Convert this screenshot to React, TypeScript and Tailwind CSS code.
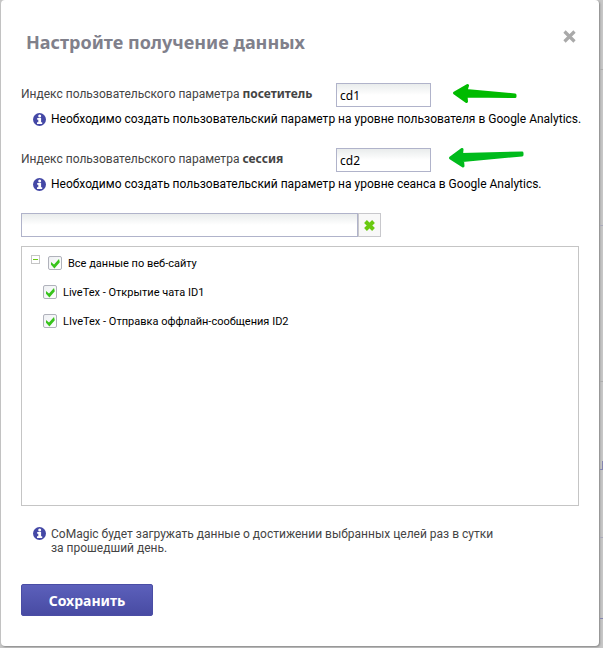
import React from "react";

function InfoIcon() {
  return (
    <svg className="h-[13px] w-[13px] shrink-0" viewBox="0 0 13 13" aria-hidden="true">
      <circle cx="6.5" cy="6.5" r="6.5" fill="#4448a6" />
      <circle cx="6.7" cy="3.1" r="1.500" fill="#fff" />
      <path d="M4.200 5.100h3.900v4.200h1.100v1.600H4V9.300h1.300V6.700H4.200z" fill="#fff" />
    </svg>
  );
}

function Arrow({ up }: { up?: boolean }) {
  return up ? (
    <svg className="ml-[17px] h-[24px] w-[77px]" viewBox="0 0 77 24" aria-hidden="true">
      <path d="M2.500 10 14 1.500 13.500 6.500 74 5v2L14.500 12.500l.5 5.500z" fill="#00bb1c" stroke="#00bb1c" strokeWidth="3" strokeLinejoin="round" />
    </svg>
  ) : (
    <svg className="ml-[21px] h-[24px] w-[66px]" viewBox="0 0 66 24" aria-hidden="true">
      <path d="M2.500 10 15.500 2.500 14 7.500 63 12v1.500L14 13l.5 5.500z" fill="#00bb00" stroke="#00bb00" strokeWidth="3" strokeLinejoin="round" />
    </svg>
  );
}

const field = "h-6 min-w-0 border border-[#b0b3ca] bg-linear-to-b from-[#e9ecec] to-white to-50% outline-none";
const bold = "font-['Noto_Sans',sans-serif] font-bold";

function Param({ id, name, value, hint, up }: { id: string; name: string; value: string; hint: string; up?: boolean }) {
  return (
    <div className="mb-[17px]">
      <div className="flex">
        <label htmlFor={id} className="w-[315px] shrink-0 pt-px leading-5 text-[#444]">
          Индекс пользовательского параметра <b className={bold}>{name}</b>
        </label>
        <input id={id} defaultValue={value} className={`${field} w-[95px] px-[3px] font-['Noto_Sans',sans-serif] text-[12px]`} />
        <Arrow up={up} />
      </div>
      <p className="flex h-6 items-center gap-[5px] pl-3 whitespace-nowrap text-black">
        <InfoIcon />
        {hint}
      </p>
    </div>
  );
}

function Check({ label, indent }: { label: string; indent?: boolean }) {
  return (
    <label className={`flex h-[29px] items-center gap-1.5 text-[11px] text-black ${indent ? "pl-[21px]" : "pl-[26px]"}`}>
      <span className="grid h-[14px] w-[14px]">
        <input type="checkbox" defaultChecked className="col-start-1 row-start-1 h-[14px] w-[14px] appearance-none rounded-[2px] border border-[#b0b2bb] bg-linear-to-br from-[#eef0f3] to-white" />
        <svg className="pointer-events-none col-start-1 row-start-1 h-[14px] w-[14px]" viewBox="0 0 14 14" aria-hidden="true">
          <path d="M3 6l3 2.500 5-5.500.8 3.200-5.400 6.200L3 8.800z" fill="#38c41c" />
        </svg>
      </span>
      <span className="pt-[3px]">{label}</span>
    </label>
  );
}

export default function App() {
  return (
    <div className="relative bg-[#c6c6c6] pr-[4px] pb-[2px] pl-px font-['Roboto',sans-serif] text-[12px]">
      <div className="absolute top-[69px] right-0 h-px w-[3px] bg-[#adadad]" />
      <div className="absolute top-[225px] right-0 h-px w-[3px] bg-[#a9a9ba]" />
      <div className="absolute top-[381px] right-0 h-px w-[3px] bg-[#adadad]" />
      <div className="absolute top-[537px] right-0 h-px w-[3px] bg-[#a9a9ba]" />
      <div className="absolute top-[461px] right-0 h-[9px] w-[3px] border-r border-b border-[#8585b0]" />
      <div className="absolute top-[611px] right-0 h-[8px] w-[3px] border-b border-[#8585b0]" />
      <main className="rounded-[4px] bg-white px-5 py-[30px] shadow-[1px_1px_2px_#888]">
        <header className="mb-[29px] flex items-start justify-between pl-[5px]">
          <h1 className={`${bold} text-[18px] leading-6 text-[#80808b]`}>Настройте получение данных</h1>
          <button aria-label="Закрыть" className="mr-[3px] h-[13px] w-[13px]">
            <svg viewBox="0 0 13 13" aria-hidden="true">
              <path d="M1.500 1.500l10 10m0-10l-10 10" stroke="#a9a9a9" strokeWidth="3.200" />
            </svg>
          </button>
        </header>
        <Param id="visitor" name="посетитель" value="cd1" hint="Необходимо создать пользовательский параметр на уровне пользователя в Google Analytics." />
        <Param id="session" name="сессия" value="cd2" hint="Необходимо создать пользовательский параметр на уровне сеанса в Google Analytics." up />
        <div className="flex">
          <input aria-label="Поиск" className={`${field} w-[337px] px-1`} />
          <button aria-label="Очистить" className="flex h-6 w-[23px] items-center justify-center border border-[#c8c8cc] bg-[#f8f8f8]">
            <svg className="h-[11px] w-[11px] shrink-0" viewBox="0 0 11 11" aria-hidden="true">
              <path d="M1.500 1.500l8 8m0-8l-8 8" stroke="#69c910" strokeWidth="3.900" />
            </svg>
          </button>
        </div>
        <section className="mt-[9px] h-[260px] border border-[#c5c5c5] pt-px">
          <div className="flex">
            <button aria-label="Свернуть" className="mt-[7px] ml-[9px] -mr-[18px] flex h-[9px] w-[9px] items-center justify-center border border-[#c5c5c5]">
              <span className="h-px w-[5px] bg-[#69c910]" />
            </button>
            <Check label="Все данные по веб-сайту" />
          </div>
          <Check label="LiveTex - Открытие чата ID1" indent />
          <Check label="LIveTex - Отправка оффлайн-сообщения ID2" indent />
        </section>
        <p className="mt-[21px] mb-[29px] flex gap-[5px] pl-3 leading-[14px] text-[#444]">
          <InfoIcon />
          <span>
            CoMagic будет загружать данные о достижении выбранных целей раз в сутки
            <br />
            за прошедший день.
          </span>
        </p>
        <button className={`${bold} h-8 w-[132px] rounded-[2px] border border-[#4a4da5] bg-linear-to-b from-[#5c60bb] to-[#484ba3] text-[14px] text-white`}>
          Сохранить
        </button>
      </main>
    </div>
  );
}
